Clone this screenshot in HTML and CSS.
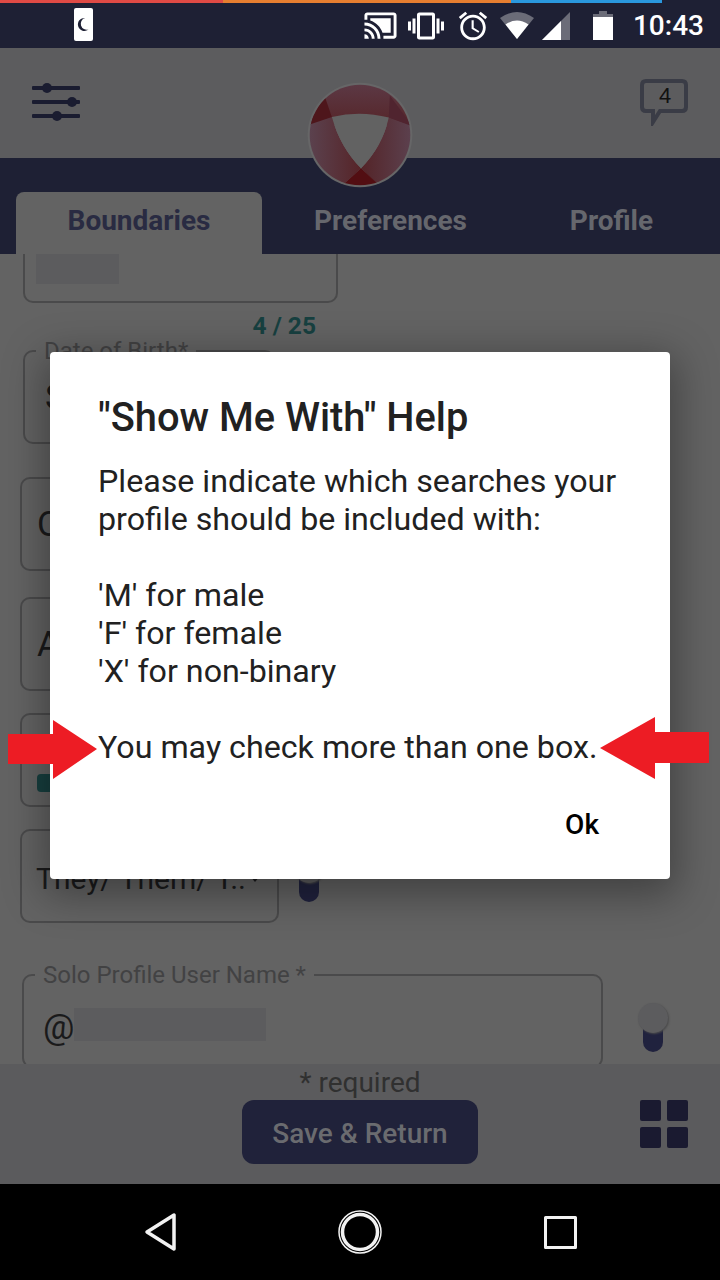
FILE: index.html
```html
<!DOCTYPE html>
<html lang="en">
<head>
  <meta charset="UTF-8" />
  <title>Show Me With Help</title>
  <link rel="stylesheet" href="styles.css">
</head>
<body>
  <div class="phone">
    <!-- Android status bar -->
    <div class="stripe">
      <span class="stripe-red"></span>
      <span class="stripe-orange"></span>
      <span class="stripe-blue"></span>
    </div>
    <div class="status-bar">
      <svg class="ic-moon" width="19" height="33" viewBox="0 0 19 33">
        <rect width="19" height="33" rx="2" fill="#fff"/>
        <path d="M11 10a6.500 6.500 0 1 0 3.500 11.500a6 6 0 0 1 -3.500 -11.500z" fill="#1e2034"/>
      </svg>
      <div class="status-icons">
        <svg class="ic-cast" width="35" height="35" viewBox="0 0 24 24" fill="#fff"><path d="M1 18v3h3c0-1.660-1.340-3-3-3zm0-4v2c2.760 0 5 2.240 5 5h2c0-3.870-3.130-7-7-7zm18-7H5v1.630c3.960 1.280 7.090 4.410 8.370 8.370H19V7zM1 10v2c4.970 0 9 4.030 9 9h2c0-6.080-4.930-11-11-11zm20-7H3c-1.100 0-2 .9-2 2v3h2V5h18v14h-7v2h7c1.100 0 2-.9 2-2V5c0-1.100-.9-2-2-2z"/></svg>
        <svg class="ic-vibrate" width="36" height="36" viewBox="0 0 24 24" fill="#fff"><path d="M0 15h2V9H0v6zm3 2h2V7H3v10zm19-8v6h2V9h-2zm-3 8h2V7h-2v10zM16.500 3h-9C6.670 3 6 3.670 6 4.500v15c0 .83.67 1.500 1.500 1.500h9c.83 0 1.500-.67 1.500-1.500v-15c0-.83-.67-1.500-1.500-1.500zM16 19H8V5h8v14z"/></svg>
        <svg class="ic-alarm" width="34" height="34" viewBox="0 0 24 24" fill="#fff"><path d="M22 5.720l-4.600-3.860-1.290 1.530 4.600 3.860L22 5.720zM7.880 3.390L6.600 1.860 2 5.710l1.290 1.530 4.590-3.850zM12.500 8H11v6l4.750 2.850.75-1.230-4-2.370V8zM12 4c-4.970 0-9 4.030-9 9s4.030 9 9 9c4.970 0 9-4.030 9-9s-4.030-9-9-9zm0 16c-3.870 0-7-3.130-7-7s3.130-7 7-7 7 3.130 7 7-3.130 7-7 7z"/></svg>
        <svg class="ic-wifi" width="34" height="29" viewBox="0 0 34 29">
          <path d="M0 7Q17 -5 34 7L17 28z" fill="#6b6c78"/>
          <path d="M5.500 13.500Q17 5.500 28.500 13.500L17 28z" fill="#fff"/>
        </svg>
        <svg class="ic-signal" width="28" height="28" viewBox="0 0 28 28">
          <path d="M0 28L28 0V28z" fill="#6b6c78"/>
          <path d="M0 28L19 9V28z" fill="#fff"/>
        </svg>
        <svg class="ic-battery" width="20" height="29" viewBox="0 0 20 29">
          <path d="M6 0h8v3h6v5H0V3h6z" fill="#6b6c78"/>
          <rect y="6" width="20" height="23" fill="#fff"/>
        </svg>
        <span class="clock">10:43</span>
      </div>
    </div>

    <!-- App header -->
    <header class="app-header">
      <svg class="ic-sliders" width="48" height="40" viewBox="0 0 48 40" fill="#1a1c30">
        <rect y="4" width="48" height="4" rx="1"/><circle cx="15" cy="6" r="5"/>
        <rect y="18" width="48" height="4" rx="1"/><circle cx="40" cy="20" r="5"/>
        <rect y="32" width="48" height="4" rx="1"/><circle cx="25" cy="34" r="5"/>
      </svg>
      <div class="chat-bubble">
        <svg width="48" height="47" viewBox="0 0 48 47">
          <path d="M6 2H42Q46 2 46 6V28Q46 32 42 32H20L13 43V32H6Q2 32 2 28V6Q2 2 6 2z" fill="none" stroke="#3a3c46" stroke-width="4"/>
        </svg>
        <span class="chat-count">4</span>
      </div>
    </header>

    <!-- Tabs -->
    <nav class="tabs">
      <div class="tab tab-active">Boundaries</div>
      <div class="tab tab-prefs">Preferences</div>
      <div class="tab tab-profile">Profile</div>
    </nav>

    <svg class="logo" width="106" height="106" viewBox="51 36 316 316">
      <defs>
        <clipPath id="logoClip"><circle cx="209" cy="194" r="150"/></clipPath>
        <linearGradient id="logoLeft" x1="0" x2="1" y1="0" y2="0">
          <stop offset="0" stop-color="#5b4350"/>
          <stop offset="1" stop-color="#562428"/>
        </linearGradient>
        <linearGradient id="logoRight" x1="0" x2="1" y1="0" y2="0">
          <stop offset="0" stop-color="#542428"/>
          <stop offset="1" stop-color="#5c4250"/>
        </linearGradient>
        <linearGradient id="logoTop" x1="0" x2="0" y1="0" y2="1">
          <stop offset="0" stop-color="#5c3a46"/>
          <stop offset="1" stop-color="#562529"/>
        </linearGradient>
      </defs>
      <circle cx="209" cy="194" r="156" fill="#666667"/>
      <g clip-path="url(#logoClip)">
        <rect x="50" y="35" width="320" height="130" fill="url(#logoTop)"/>
        <path d="M50 158L125 140Q150 230 212 293L150 350H50z" fill="url(#logoLeft)"/>
        <path d="M370 168L295 142Q275 230 212 293L270 350H370z" fill="url(#logoRight)"/>
        <path d="M55 164L103 76L125 140z" fill="#4e161b"/>
        <path d="M298 76L365 168L295 142z" fill="#50242f"/>
        <path d="M155 345L212 293L268 345z" fill="#520e12"/>
        <path d="M125 140Q210 120 295 142Q275 230 212 293Q150 230 125 140z" fill="#626262"/>
      </g>
    </svg>

    <!-- Scrolling form, dimmed behind the dialog -->
    <main class="content">
      <div class="field field-name"><span class="redacted redacted-name"></span></div>
      <div class="counter">4 / 25</div>
      <div class="field field-dob">
        <span class="field-label">Date of Birth*</span>
        <span class="field-value">S</span>
      </div>
      <div class="field field-wide"><span class="field-value">O</span></div>
      <div class="field field-wide"><span class="field-value">A</span></div>
      <div class="field field-wide field-chip"><span class="chip"></span></div>
      <div class="field-row">
        <div class="field field-pronoun">
          <span class="field-value">They/ Them/ T..</span>
          <span class="caret"></span>
        </div>
        <div class="toggle"><span class="knob"></span></div>
      </div>
      <div class="field-row field-row-solo">
        <div class="field field-solo">
          <span class="field-label">Solo Profile User Name *</span>
          <span class="field-value">@</span><span class="redacted redacted-user"></span>
        </div>
        <div class="toggle toggle-solo"><span class="knob"></span></div>
      </div>
    </main>

    <footer class="footer">
      <div class="required">* required</div>
      <div class="footer-row">
        <button class="save-btn">Save &amp; Return</button>
        <svg class="ic-grid" width="48" height="48" viewBox="0 0 48 48" fill="#1a1a30">
          <rect width="21" height="21" rx="2"/><rect x="27" width="21" height="21" rx="2"/>
          <rect y="27" width="21" height="21" rx="2"/><rect x="27" y="27" width="21" height="21" rx="2"/>
        </svg>
      </div>
    </footer>

    <!-- Android nav bar -->
    <div class="nav-bar">
      <svg width="44" height="44" viewBox="0 0 44 44" fill="none" stroke="#f2f2f2" stroke-width="3.500" stroke-linejoin="round">
        <path d="M9 22L36 5V39z"/>
      </svg>
      <svg width="44" height="44" viewBox="0 0 44 44" fill="none" stroke="#f2f2f2">
        <circle cx="22" cy="22" r="21" stroke-width="1.500"/>
        <circle cx="22" cy="22" r="17.500" stroke-width="3.500"/>
      </svg>
      <svg width="44" height="44" viewBox="0 0 44 44" fill="none" stroke="#f2f2f2" stroke-width="3" stroke-linejoin="round">
        <rect x="7.500" y="7.500" width="30" height="30"/>
      </svg>
    </div>

    <!-- Help dialog -->
    <div class="dialog">
      <h2 class="dialog-title">"Show Me With" Help</h2>
      <p class="dialog-body">Please indicate which searches your<br>profile should be included with:<br><br>'M' for male<br>'F' for female<br>'X' for non-binary<br><br>You may check more than one box.</p>
      <div class="dialog-actions"><span class="ok-btn">Ok</span></div>
    </div>

    <!-- Red annotation arrows -->
    <svg class="arrow arrow-left" width="90" height="59" viewBox="0 0 90 59"><path d="M0 14H45V0L89 29L45 59V44H0z" fill="#ed1c24"/></svg>
    <svg class="arrow arrow-right" width="110" height="62" viewBox="0 0 110 62"><path d="M109 15H55V0L0 31L55 62V46H109z" fill="#ed1c24"/></svg>
  </div>
</body>
</html>
```

FILE: styles.css
```css
/* Basic reset */
* {
  margin: 0;
  padding: 0;
  box-sizing: border-box;
}

body {
  font-family: Roboto, "Liberation Sans", sans-serif;
  background-color: #000;
}

.phone {
  position: relative;
  width: 720px;
  height: 1280px;
  overflow: hidden;
  display: flex;
  flex-direction: column;
}

/* Status bar */
.stripe {
  height: 3px;
  display: flex;
  background-color: #1e2034;
  flex-shrink: 0;
}
.stripe-red { width: 223px; background-color: #e04a45; }
.stripe-orange { width: 288px; background-color: #e67e30; }
.stripe-blue { width: 151px; background-color: #2a98de; }

.status-bar {
  height: 45px;
  background-color: #1e2034;
  display: flex;
  align-items: center;
  justify-content: space-between;
  padding: 0 16px 0 74px;
  flex-shrink: 0;
}
.ic-moon { margin-top: -2px; }
.status-icons {
  display: flex;
  align-items: center;
  color: #fff;
}
.ic-vibrate { margin-left: 10px; }
.ic-alarm { margin-left: 12px; }
.ic-wifi { margin-left: 10px; }
.ic-signal { margin-left: 8px; }
.ic-battery { margin-left: 23px; }
.clock {
  margin-left: 20px;
  font-size: 28px;
  font-weight: 500;
}

/* App header */
.app-header {
  height: 110px;
  background-color: #5c5c5e;
  display: flex;
  justify-content: space-between;
  align-items: flex-start;
  padding: 31px 32px 0;
  flex-shrink: 0;
}
.ic-sliders { margin-top: 3px; }
.chat-bubble {
  position: relative;
  width: 48px;
  height: 47px;
}
.chat-count {
  position: absolute;
  top: 4px;
  left: 0;
  width: 50px;
  text-align: center;
  font-family: "Liberation Sans", sans-serif;
  font-size: 22px;
  color: #111;
}

.logo {
  position: absolute;
  left: 307px;
  top: 82px;
}

/* Tabs */
.tabs {
  height: 96px;
  background-color: #1e2034;
  display: flex;
  align-items: flex-end;
  padding-left: 16px;
  flex-shrink: 0;
}
.tab {
  height: 62px;
  line-height: 58px;
  text-align: center;
  font-size: 28px;
  font-weight: 700;
  color: #66676d;
}
.tab-active {
  width: 246px;
  background-color: #636363;
  border-radius: 8px 8px 0 0;
  color: #292b42;
}
.tab-prefs { width: 257px; }
.tab-profile { width: 185px; }

/* Form */
.content {
  height: 810px;
  background-color: #636363;
  overflow: hidden;
  padding-left: 20px;
  flex-shrink: 0;
}
.field {
  position: relative;
  height: 94px;
  width: 259px;
  border: 2px solid #4a4a4b;
  border-radius: 10px;
  padding-left: 15px;
  margin-bottom: 26px;
  display: flex;
  align-items: center;
}
.field-name {
  width: 315px;
  margin-left: 3px;
  margin-top: -45px;
  margin-bottom: 0;
  align-items: flex-start;
  padding-top: 43px;
  padding-left: 11px;
}
.counter {
  width: 296px;
  text-align: right;
  height: 47px;
  line-height: 46px;
  font-size: 24.500px;
  font-weight: 700;
  color: #174040;
}
.field-dob {
  width: 252px;
  margin-left: 3px;
  margin-bottom: 33px;
  padding-left: 20px;
}
.field-chip { margin-top: -4px; margin-bottom: 22px; }
.field-label {
  position: absolute;
  left: 11px;
  top: -13px;
  padding: 0 8px;
  background-color: #636363;
  font-size: 24px;
  line-height: 24px;
  color: #424243;
  white-space: nowrap;
}
.field-value {
  font-size: 35px;
  color: #1a1a1b;
  white-space: nowrap;
}
.redacted {
  background-color: #5c5c5e;
  display: block;
}
.redacted-name { width: 83px; height: 30px; }
.redacted-user { width: 192px; height: 33px; margin-top: -5px; }
.chip {
  width: 18px;
  height: 18px;
  margin-top: 46px;
  background-color: #173f3f;
  border-radius: 4px;
}
.field-pronoun { padding-left: 14px; }
.field-pronoun .field-value { font-size: 30px; padding-top: 4px; }
.caret {
  border: 5px solid transparent;
  border-top: 6px solid #1a1a1b;
  margin: 10px 0 0 4px;
}
.field-row {
  display: flex;
  align-items: center;
  gap: 20px;
  margin-bottom: 51px;
}
.field-row .field { margin-bottom: 0; }
.field-row-solo { margin-bottom: 0; align-items: flex-start; }
.field-solo {
  width: 581px;
  margin-left: 2px;
  padding-left: 19px;
  padding-top: 12px;
}
.toggle {
  position: relative;
  width: 20px;
  height: 42px;
  margin-top: 10px;
  background-color: #20223e;
  border-radius: 10px;
}
.knob {
  position: absolute;
  left: -5px;
  top: -7px;
  width: 30px;
  height: 30px;
  border-radius: 50%;
  background-color: #5c5c5e;
  box-shadow: 1px 1px 2px #4a4a4b;
}
.toggle-solo {
  margin-left: 20px;
  margin-top: 36px;
}

/* Footer */
.footer {
  height: 120px;
  background-color: #5b5b5d;
  flex-shrink: 0;
  text-align: center;
}
.required {
  height: 36px;
  line-height: 38px;
  font-size: 28px;
  color: #303030;
}
.footer-row {
  display: flex;
  justify-content: flex-end;
  align-items: flex-start;
  padding-right: 32px;
  gap: 162px;
}
.save-btn {
  width: 236px;
  height: 64px;
  padding-top: 3px;
  border: none;
  border-radius: 12px;
  background-color: #20223a;
  color: #6a6b6f;
  font-family: Roboto, sans-serif;
  font-size: 28px;
  font-weight: 500;
}

/* Nav bar */
.nav-bar {
  flex: 1;
  background-color: #000;
  display: flex;
  align-items: center;
  justify-content: center;
  gap: 156px;
}

/* Dialog */
.dialog {
  position: absolute;
  left: 50px;
  top: 352px;
  width: 620px;
  height: 527px;
  background-color: #fff;
  border-radius: 4px;
  padding: 42px 48px 0;
  box-shadow: 0 10px 40px 6px rgba(0, 0, 0, 0.35);
}
.dialog-title {
  font-size: 39.800px;
  line-height: 48px;
  font-weight: 500;
  color: #212121;
}
.dialog-body {
  margin-top: 20px;
  font-size: 32.200px;
  line-height: 38px;
  color: #212121;
  white-space: nowrap;
}
.dialog-actions {
  display: flex;
  justify-content: flex-end;
  margin-top: 42px;
  padding-right: 23px;
}
.ok-btn {
  font-size: 28px;
  font-weight: 500;
  color: #000;
}

/* Annotation arrows */
.arrow { position: absolute; }
.arrow-left { left: 8px; top: 720px; }
.arrow-right { left: 600px; top: 717px; }
```
